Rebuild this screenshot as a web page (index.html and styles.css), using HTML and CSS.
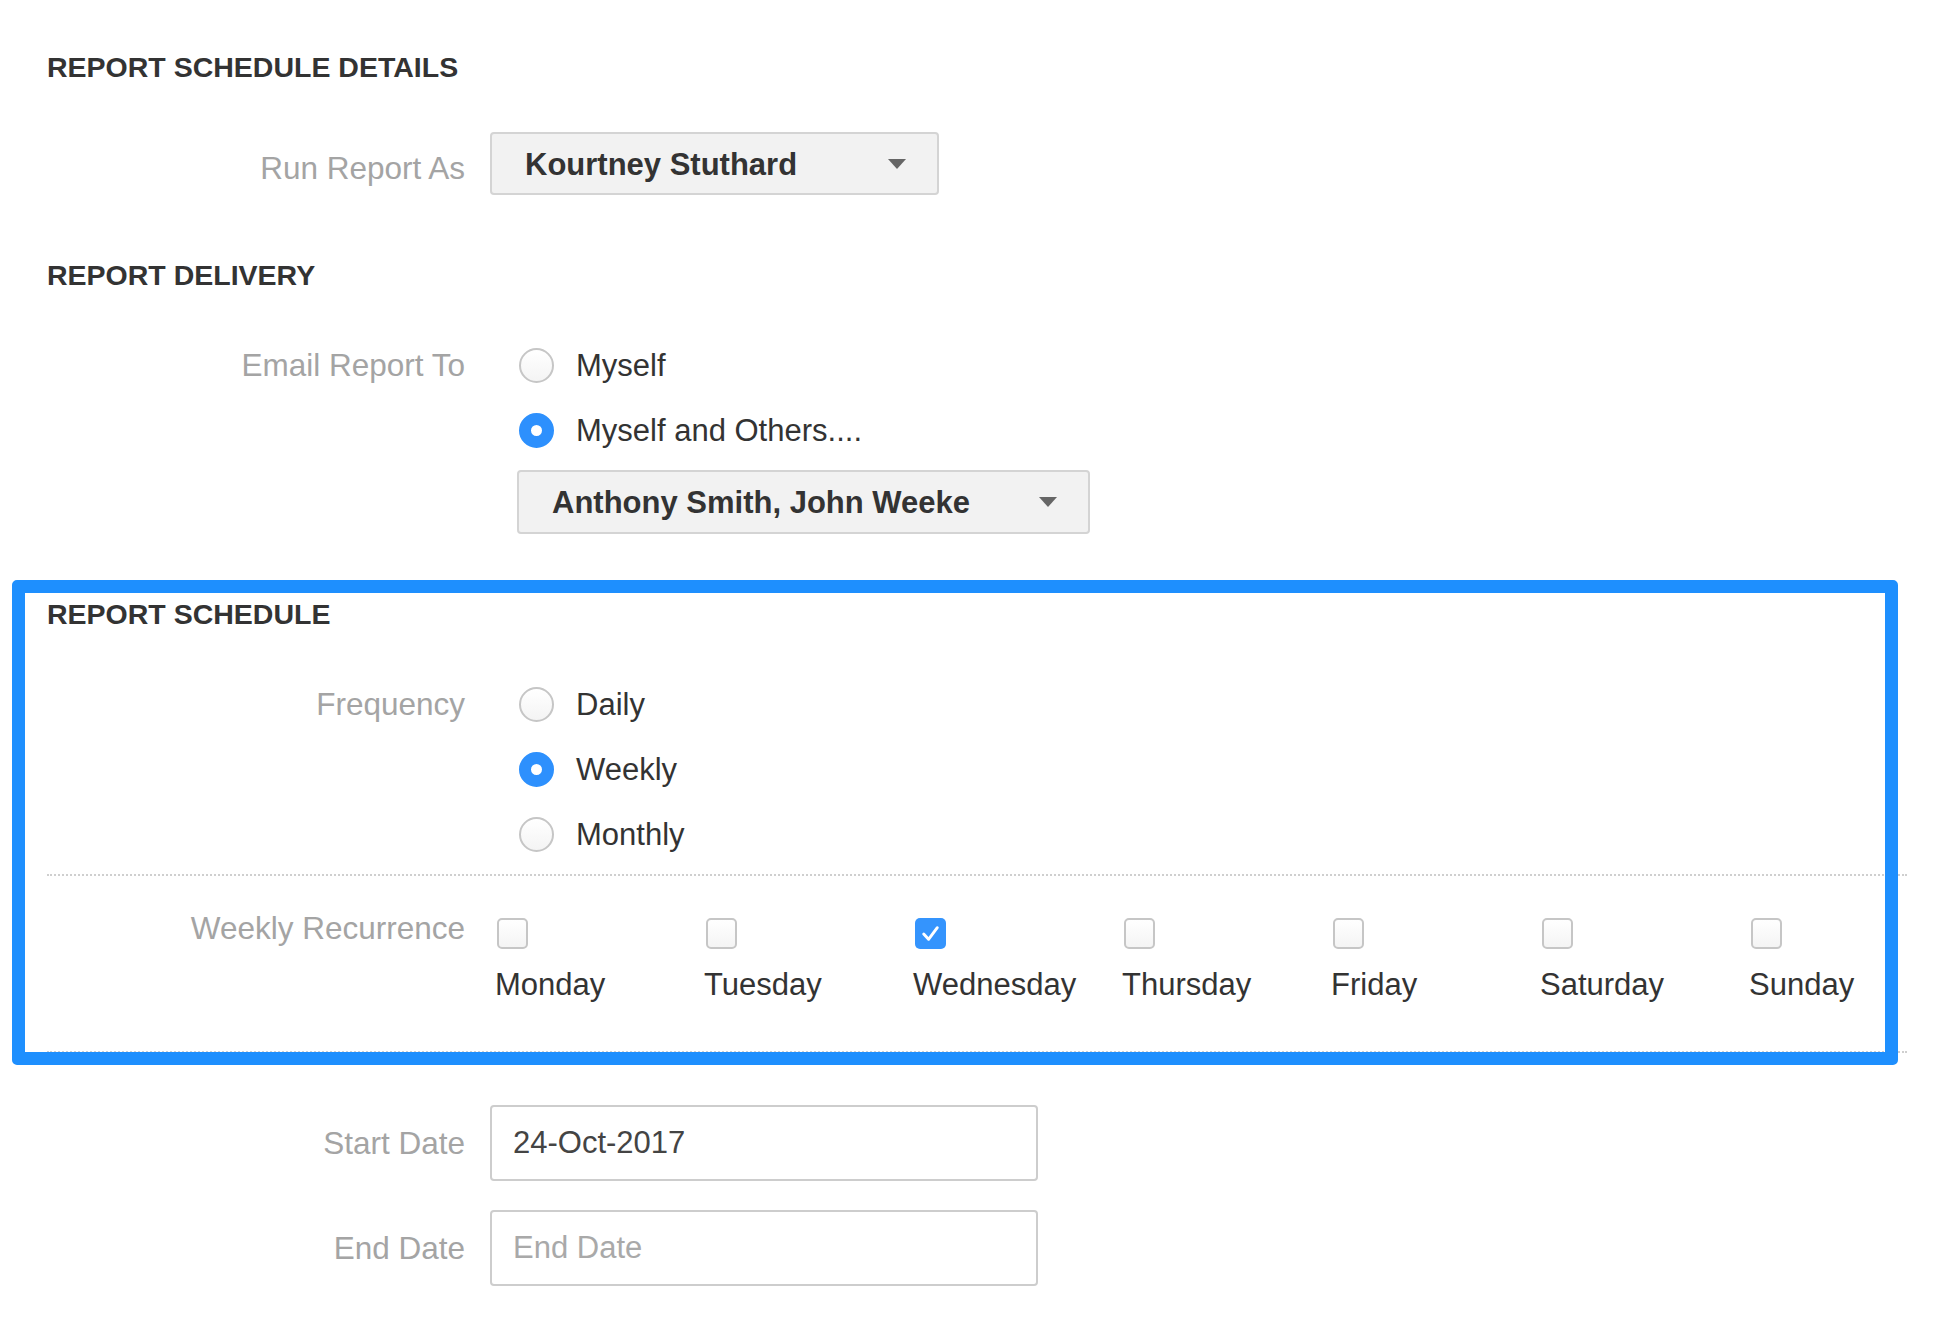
FILE: index.html
```html
<!DOCTYPE html>
<html lang="en">
  <head>
    <title>Report Schedule</title>
    <link rel="stylesheet" href="styles.css">
  </head>
  <body>
    <div class="form">
      <p class="section-title">REPORT SCHEDULE DETAILS</p>

      <!-- Run report as -->
      <div class="row row-run">
        <span class="label">Run Report As</span>
        <div class="select select-user">
          <span>Kourtney Stuthard</span>
          <span class="caret"></span>
        </div>
      </div>

      <p class="section-title title-gap">REPORT DELIVERY</p>

      <div class="row row-radios">
        <span class="label label-top">Email Report To</span>
        <div class="radio-group">
          <label class="radio-option"><span class="radio"></span>Myself</label>
          <label class="radio-option"><span class="radio checked"></span>Myself and Others....</label>
          <div class="select select-others">
            <span>Anthony Smith, John Weeke</span>
            <span class="caret"></span>
          </div>
        </div>
      </div>

      <p class="section-title title-gap">REPORT SCHEDULE</p>

      <div class="row row-radios">
        <span class="label label-top">Frequency</span>
        <div class="radio-group">
          <label class="radio-option"><span class="radio"></span>Daily</label>
          <label class="radio-option"><span class="radio checked"></span>Weekly</label>
          <label class="radio-option"><span class="radio"></span>Monthly</label>
        </div>
      </div>

      <div class="divider"></div>

      <div class="row row-days">
        <span class="label label-days">Weekly Recurrence</span>
        <div class="days">
          <label class="day"><span class="checkbox"></span>Monday</label>
          <label class="day"><span class="checkbox"></span>Tuesday</label>
          <label class="day">
            <span class="checkbox checked">
              <svg viewBox="0 0 32 32" width="31" height="31"><path d="M9 16.5l5 5.5 9-12" fill="none" stroke="#fff" stroke-width="3" stroke-linecap="round" stroke-linejoin="round"/></svg>
            </span>Wednesday
          </label>
          <label class="day"><span class="checkbox"></span>Thursday</label>
          <label class="day"><span class="checkbox"></span>Friday</label>
          <label class="day"><span class="checkbox"></span>Saturday</label>
          <label class="day"><span class="checkbox"></span>Sunday</label>
        </div>
      </div>

      <div class="divider divider-bottom"></div>

      <div class="row row-date">
        <span class="label">Start Date</span>
        <div class="text-input">24-Oct-2017</div>
      </div>
      <div class="row row-date row-end">
        <span class="label">End Date</span>
        <div class="text-input placeholder">End Date</div>
      </div>

      <!-- highlight around the schedule block -->
      <div class="highlight"></div>
    </div>
  </body>
</html>
```

FILE: styles.css
```css
body {
  margin: 0;
  background-color: white;
  color: #333;
  font-family: "Liberation Sans", Arial, sans-serif;
}
.form {
  position: relative;
  padding: 51px 45px 60px 47px;
}
.section-title {
  margin: 0;
  font-size: 28.5px;
  line-height: 32px;
  font-weight: bold;
  color: #333;
}
.title-gap {
  margin-top: 64px;
}
.row {
  display: grid;
  grid-template-columns: 418px 1fr;
  column-gap: 25px;
  align-items: center;
}
.label {
  text-align: right;
  font-size: 31.5px;
  line-height: 36px;
  color: #a4a4a4;
}
.label-top {
  align-self: start;
  margin-top: 14px;
}
.row-run {
  margin-top: 49px;
}
.row-run .label {
  margin-top: 8px;
}
.select {
  box-sizing: border-box;
  height: 63px;
  display: flex;
  align-items: center;
  justify-content: space-between;
  padding: 0 31px 0 33px;
  background-color: #f2f2f2;
  border: 2px solid #d4d4d4;
  border-radius: 4px;
  font-size: 31px;
  font-weight: bold;
  color: #333;
}
.select span:first-child {
  margin-top: 2px;
}
.select-user {
  width: 449px;
}
.select-others {
  width: 573px;
  height: 64px;
  margin-top: 7px;
}
.caret {
  width: 0;
  height: 0;
  border-left: 9px solid transparent;
  border-right: 9px solid transparent;
  border-top: 10px solid #666;
}
.row-radios {
  margin-top: 42px;
}
.radio-group {
  padding-left: 27px;
}
.radio-option {
  display: flex;
  align-items: center;
  height: 65px;
  font-size: 31px;
  color: #333;
}
.radio {
  box-sizing: border-box;
  width: 35px;
  height: 35px;
  margin-left: 2px;
  margin-right: 22px;
  border-radius: 50%;
  border: 2px solid #c6c6c6;
  background: linear-gradient(#fff, #f4f4f4);
}
.radio.checked {
  border: 12px solid #2d90fd;
  background: white;
}
.divider {
  margin-top: 7px;
  border-top: 2px dotted #cfcfcf;
}
.divider-bottom {
  margin-top: 48px;
}
.row-days {
  align-items: start;
  margin-top: 42px;
}
.label-days {
  margin-top: -8px;
}
.days {
  display: grid;
  grid-template-columns: repeat(7, 209px);
  padding-left: 5px;
}
.day {
  display: flex;
  flex-direction: column;
  align-items: flex-start;
  gap: 18px;
  font-size: 31px;
  line-height: 36px;
  color: #333;
}
.checkbox {
  box-sizing: border-box;
  width: 31px;
  height: 31px;
  margin-left: 2px;
  border: 2px solid #c6c6c6;
  border-radius: 5px;
  background: linear-gradient(#fff, #f4f4f4);
}
.checkbox.checked {
  border: none;
  background: #3494fd;
}
.checkbox svg {
  display: block;
}
.row-date {
  margin-top: 52px;
}
.row-end {
  margin-top: 29px;
}
.text-input {
  box-sizing: border-box;
  width: 548px;
  height: 76px;
  display: flex;
  align-items: center;
  padding-left: 21px;
  border: 2px solid #cdcdcd;
  border-radius: 4px;
  font-size: 31px;
  color: #444;
}
.placeholder {
  color: #a9a9a9;
}
.highlight {
  position: absolute;
  left: 12px;
  top: 580px;
  width: 1886px;
  height: 485px;
  box-sizing: border-box;
  border: 13px solid #1e8ffe;
  border-radius: 5px;
  pointer-events: none;
}
```
